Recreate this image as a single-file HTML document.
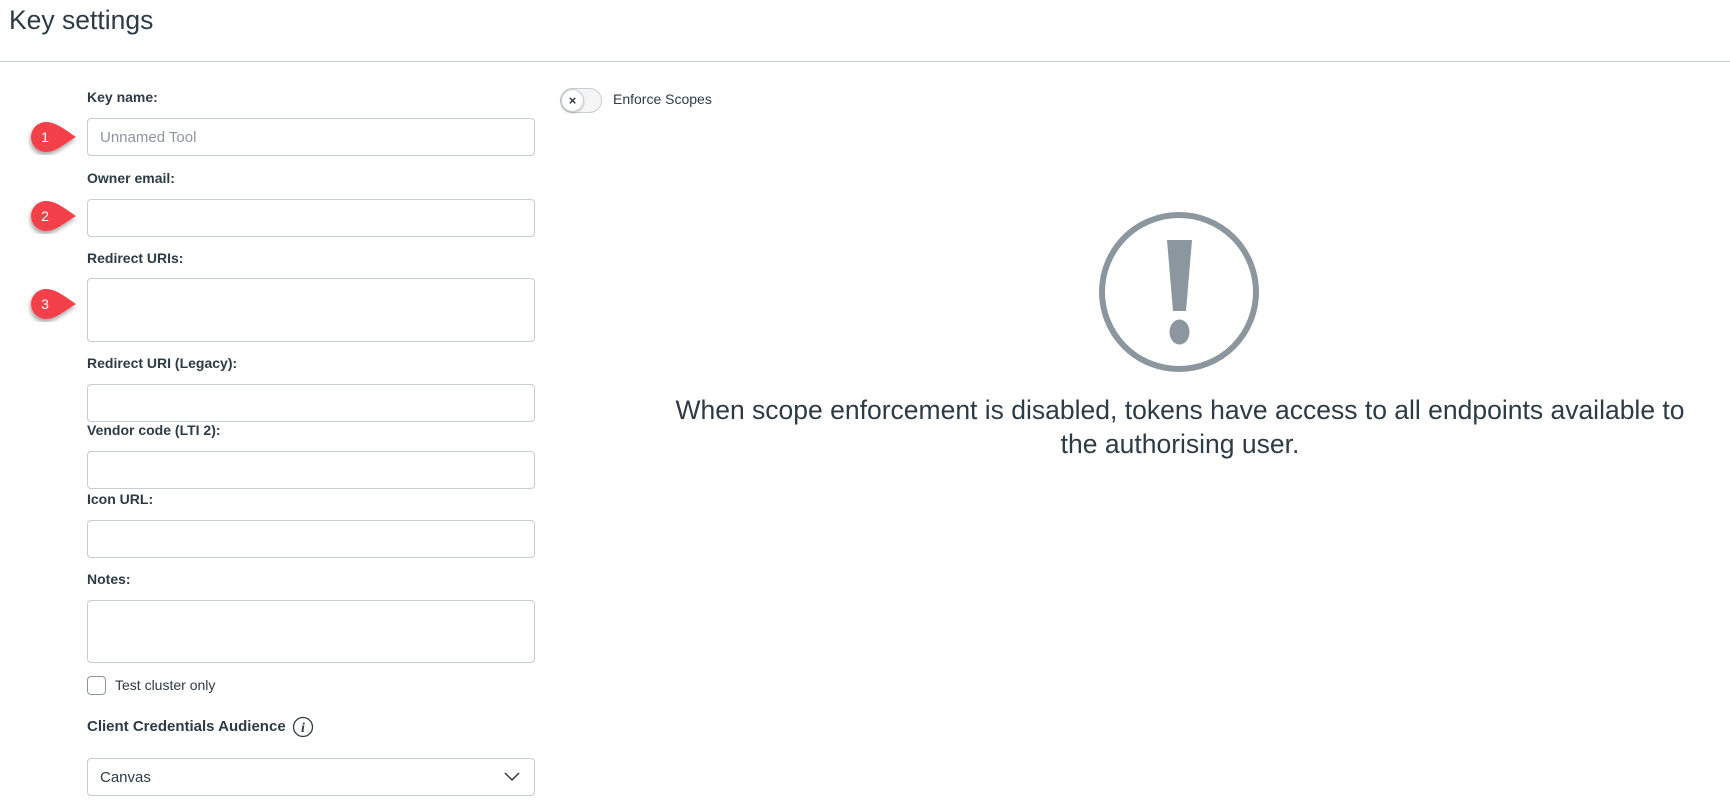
<!DOCTYPE html>
<html><head><meta charset="utf-8"><style>
*{box-sizing:border-box;margin:0;padding:0}
body{width:1730px;height:811px;background:#fff;font-family:"Liberation Sans",sans-serif;color:#2d3b45;position:relative;overflow:hidden}
.t{position:absolute;left:9px;top:5px;font-size:26.5px;color:#2d3b45}
.hr{position:absolute;left:0;top:61px;width:1730px;height:1px;background:#c7cdd1}
.lbl{position:absolute;left:87px;font-size:14px;font-weight:bold;color:#2d3b45}
.in{position:absolute;left:87px;width:448px;height:38px;border:1px solid #c7cdd1;border-radius:4px;background:#fff}
.ph{position:absolute;left:12px;top:10px;font-size:15px;color:#8b969e}
.badge{position:absolute;left:28px;width:50px;height:36px}
</style></head><body>
<div class="t">Key settings</div>
<div class="hr"></div>

<div class="lbl" style="top:89px">Key name:</div>
<div class="in" style="top:118px"><span class="ph">Unnamed Tool</span></div>
<div class="lbl" style="top:170px">Owner email:</div>
<div class="in" style="top:199px"></div>
<div class="lbl" style="top:250px">Redirect URIs:</div>
<div class="in" style="top:278px;height:64px"></div>
<div class="lbl" style="top:355px">Redirect URI (Legacy):</div>
<div class="in" style="top:384px"></div>
<div class="lbl" style="top:422px">Vendor code (LTI 2):</div>
<div class="in" style="top:451px"></div>
<div class="lbl" style="top:491px">Icon URL:</div>
<div class="in" style="top:520px"></div>
<div class="lbl" style="top:571px">Notes:</div>
<div class="in" style="top:600px;height:63px"></div>

<div style="position:absolute;left:87px;top:676px;width:19px;height:19px;border:1px solid #8b969e;border-radius:4px"></div>
<div style="position:absolute;left:115px;top:677px;font-size:14px">Test cluster only</div>
<div class="lbl" style="top:718px;font-size:15px">Client Credentials Audience</div>
<svg style="position:absolute;left:292px;top:716px" width="22" height="22" viewBox="0 0 22 22"><circle cx="11" cy="11" r="9.5" fill="none" stroke="#2d3b45" stroke-width="1.3"/><text x="11" y="16" font-family="Liberation Serif" font-style="italic" font-weight="bold" font-size="14" text-anchor="middle" fill="#2d3b45">i</text></svg>
<div class="in" style="top:758px"><span class="ph" style="color:#2d3b45;top:10px">Canvas</span>
<svg style="position:absolute;right:14px;top:13px" width="16" height="10" viewBox="0 0 16 10"><path d="M1 1l7 7 7-7" fill="none" stroke="#2d3b45" stroke-width="1.5"/></svg></div>

<svg class="badge" style="top:119px" viewBox="0 0 50 36"><defs><filter id="s"><feDropShadow dx="-1" dy="3" stdDeviation="2" flood-opacity=".35"/></filter></defs><path d="M18 3a15 15 0 1 0 0 30c10 0 18-8 30-15C36 10 28 3 18 3z" fill="#f43f4a" filter="url(#s)"/><text x="17" y="23" font-size="14" fill="#fff" text-anchor="middle">1</text></svg>
<svg class="badge" style="top:198px" viewBox="0 0 50 36"><path d="M18 3a15 15 0 1 0 0 30c10 0 18-8 30-15C36 10 28 3 18 3z" fill="#f43f4a" filter="url(#s)"/><text x="17" y="23" font-size="14" fill="#fff" text-anchor="middle">2</text></svg>
<svg class="badge" style="top:286px" viewBox="0 0 50 36"><path d="M18 3a15 15 0 1 0 0 30c10 0 18-8 30-15C36 10 28 3 18 3z" fill="#f43f4a" filter="url(#s)"/><text x="17" y="23" font-size="14" fill="#fff" text-anchor="middle">3</text></svg>

<div style="position:absolute;left:560px;top:88px;width:42px;height:25px;border-radius:13px;background:#f5f5f5;border:1px solid #c7cdd1"></div>
<div style="position:absolute;left:561px;top:89px;width:23px;height:23px;border-radius:50%;background:#fff;border:1px solid #c7cdd1;box-shadow:0 1px 2px rgba(0,0,0,.2);text-align:center;font-size:13px;font-weight:bold;line-height:21px">×</div>
<div style="position:absolute;left:613px;top:91px;font-size:14px">Enforce Scopes</div>

<svg style="position:absolute;left:1098px;top:211px" width="162" height="162" viewBox="0 0 162 162"><circle cx="81" cy="81" r="77" fill="none" stroke="#8b969e" stroke-width="6"/><path d="M69 29h25l-6 71h-13z" fill="#8b969e"/><ellipse cx="81.5" cy="121" rx="10" ry="12.5" fill="#8b969e"/></svg>
<div style="position:absolute;left:560px;width:1240px;top:393px;text-align:center;font-size:26.5px;line-height:34px;color:#2d3b45">When scope enforcement is disabled, tokens have access to all endpoints available to<br>the authorising user.</div>
</body></html>
